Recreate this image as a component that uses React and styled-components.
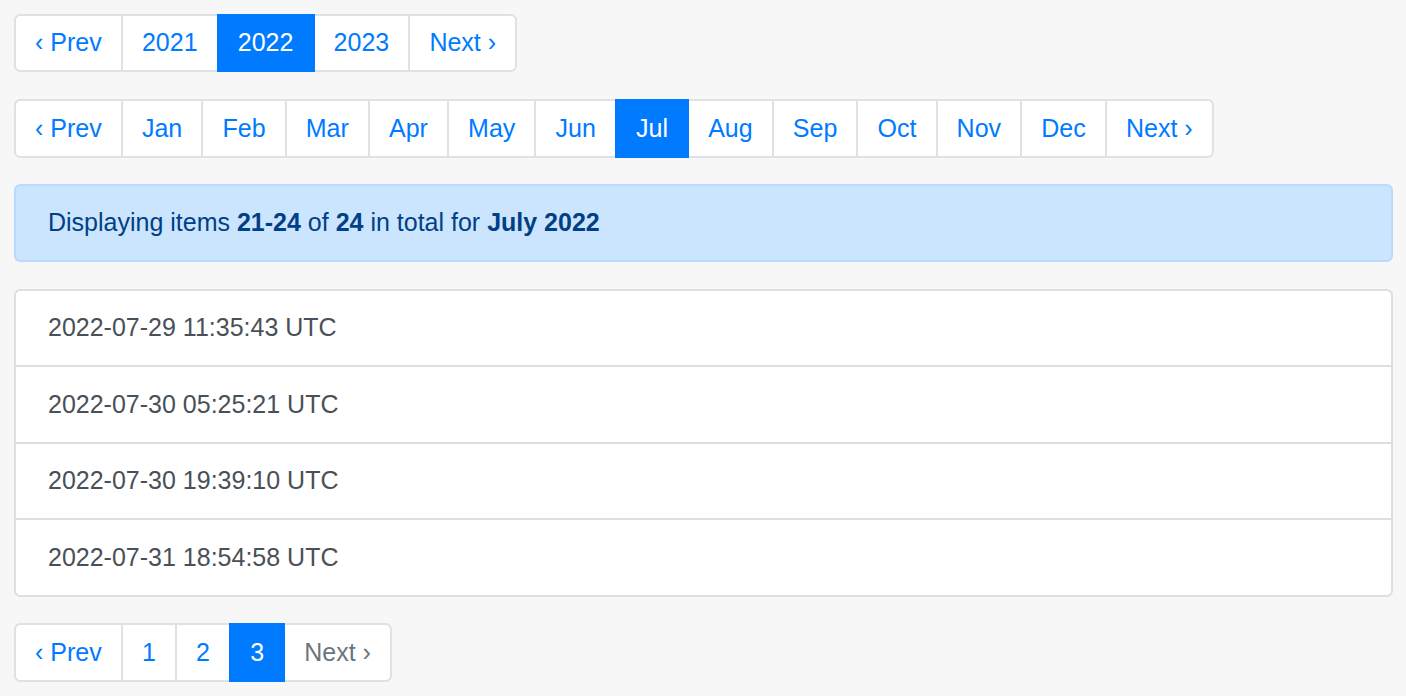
import styled, { createGlobalStyle } from "styled-components";

const GlobalStyle = createGlobalStyle`
  body {
    margin: 0;
    background: #f7f7f7;
    font-family: "Liberation Sans", Arial, sans-serif;
    font-size: 25px;
    line-height: 1.5;
    color: #212529;
  }
`;

const Page = styled.div`
  padding: 13.5px 13px 14px 14px;
  display: flex;
  flex-direction: column;
  align-items: flex-start;
  gap: 26.5px;
`;

const Pager = styled.ul`
  display: flex;
  list-style: none;
  margin: 0;
  padding: 0;
  border-radius: 6.25px;
`;

const PageItem = styled.li`
  margin-left: -2px;
  &:first-child {
    margin-left: 0;
  }
  &:first-child a {
    border-top-left-radius: 6.25px;
    border-bottom-left-radius: 6.25px;
  }
  &:last-child a {
    border-top-right-radius: 6.25px;
    border-bottom-right-radius: 6.25px;
  }
`;

const PageLink = styled.a`
  position: relative;
  display: block;
  padding: 11.75px 19.1px;
  line-height: 31.25px;
  text-decoration: none;
  cursor: pointer;
  border: 2px solid ${(p) => (p.$active ? "#007bff" : "#dee2e6")};
  background: ${(p) => (p.$active ? "#007bff" : "#fff")};
  color: ${(p) => (p.$active ? "#fff" : p.$disabled ? "#6c757d" : "#007bff")};
  z-index: ${(p) => (p.$active ? 3 : "auto")};
`;

const Alert = styled.div`
  align-self: stretch;
  padding: 18.25px 32px;
  line-height: 37.5px;
  background: #cce5ff;
  border: 2px solid #b8daff;
  border-radius: 6.25px;
  color: #004085;
`;

const List = styled.ul`
  align-self: stretch;
  list-style: none;
  margin: 0;
  padding: 0;
  background: #fff;
  border: 2px solid #dfdfdf;
  border-radius: 6.25px;
`;

const ListItem = styled.li`
  padding: 18.5px 32px;
  line-height: 37.5px;
  color: #495057;
  & + & {
    border-top: 2px solid #dfdfdf;
  }
`;

const Pagination = ({ items }) => (
  <Pager>
    {items.map((it) => (
      <PageItem key={it.label}>
        <PageLink $active={it.active} $disabled={it.disabled}>
          {it.label}
        </PageLink>
      </PageItem>
    ))}
  </Pager>
);

const years = [
  { label: "‹ Prev" },
  { label: "2021" },
  { label: "2022", active: true },
  { label: "2023" },
  { label: "Next ›" },
];

const months = [
  "‹ Prev", "Jan", "Feb", "Mar", "Apr", "May", "Jun",
  "Jul", "Aug", "Sep", "Oct", "Nov", "Dec", "Next ›",
].map((label) => ({ label, active: label === "Jul" }));

const pages = [
  { label: "‹ Prev" },
  { label: "1" },
  { label: "2" },
  { label: "3", active: true },
  { label: "Next ›", disabled: true },
];

const stamps = [
  "2022-07-29 11:35:43 UTC",
  "2022-07-30 05:25:21 UTC",
  "2022-07-30 19:39:10 UTC",
  "2022-07-31 18:54:58 UTC",
];

const App = () => (
  <>
    <GlobalStyle />
    <Page>
      <Pagination items={years} />
      <Pagination items={months} />
      <Alert>
        Displaying items <b>21-24</b> of <b>24</b> in total for <b>July 2022</b>
      </Alert>
      <List>
        {stamps.map((s) => (
          <ListItem key={s}>{s}</ListItem>
        ))}
      </List>
      <Pagination items={pages} />
    </Page>
  </>
);

export default App;
